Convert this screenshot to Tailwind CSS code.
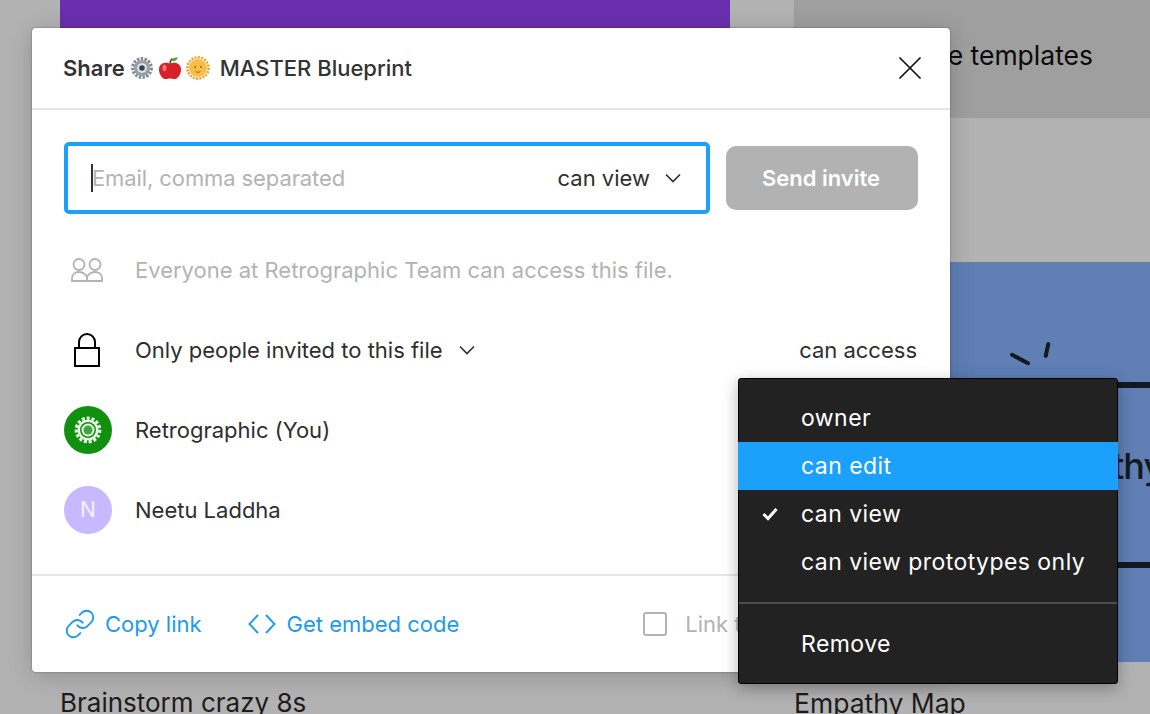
<!DOCTYPE html>
<html lang="en">
<head>
  <meta charset="UTF-8" />
  <title>Share</title>
  <script src="https://cdn.jsdelivr.net/npm/@tailwindcss/browser@4"></script>
</head>
<body class="bg-[#b2b2b2] font-['Inter',sans-serif] text-[#2e2e2e] overflow-hidden">
  <div class="relative w-[1150px] h-[714px] overflow-hidden">

    <!-- page behind the dialog -->
    <div class="grid grid-cols-[670px_356px] gap-x-[64px] pl-[60px] h-[714px] overflow-hidden">
      <div>
        <div class="h-[662px] bg-[#6a2fae]"></div>
        <div class="mt-[24px] text-[26px] leading-[34px] text-[#1c1c1c] whitespace-nowrap">Brainstorm crazy 8s</div>
      </div>
      <div>
        <div class="h-[118px] bg-[#9f9f9f] flex items-start justify-end pr-[57px] pt-[38px] text-[26.5px] leading-[34px] text-[#0a0a0a] whitespace-nowrap">Use case templates</div>
        <div class="h-[144px]"></div>
        <div class="relative h-[400px] bg-[#5f7fb5] overflow-hidden">
          <div class="absolute left-[215px] top-[95px] w-[22px] h-[4px] rotate-[28deg] rounded-full bg-[#14181f]"></div>
          <div class="absolute left-[251px] top-[80px] w-[4px] h-[16px] rotate-[12deg] rounded-full bg-[#14181f]"></div>
          <div class="absolute left-[0px] top-[120px] w-[356px] h-[6px] bg-[#14181f]"></div>
          <div class="absolute left-[0px] top-[300px] w-[356px] h-[6px] bg-[#14181f]"></div>
          <div class="absolute left-[318px] top-[182px] text-[36px] leading-[44px] tracking-[-1px] font-medium text-[#14181f]">thy</div>
        </div>
        <div class="mt-[24px] text-[26.5px] leading-[34px] text-[#1c1c1c] whitespace-nowrap">Empathy Map</div>
      </div>
    </div>

    <!-- share dialog -->
    <div class="absolute left-[32px] top-[28px] w-[918px] h-[644px] bg-white rounded-[4px] shadow-[0_0_2px_rgba(0,0,0,0.4),0_4px_24px_rgba(0,0,0,0.18)] flex flex-col">
      <div class="h-[82px] border-b-2 border-[#e6e6e6] flex items-center justify-between pl-[31px] pr-[28px]">
        <div class="flex items-center text-[22px] font-semibold text-[#333] whitespace-nowrap">
          <span>Share</span>
          <svg class="ml-[6px]" width="22" height="22" viewBox="0 0 22 22"><circle cx="11" cy="11" r="9.200" fill="none" stroke="#7f8891" stroke-width="3.400" stroke-dasharray="2.400 1.400"/><circle cx="11" cy="11" r="8" fill="#98a1ab"/><circle cx="11" cy="11" r="4.800" fill="#e3e6ea"/><circle cx="11" cy="11" r="2.800" fill="#39424c"/></svg>
          <svg class="ml-[6px]" width="22" height="24" viewBox="0 0 22 24"><path d="M11 8C8 5.800 .5 6.500 0 13c-.3 5 3.500 10 6.500 10 1.500 0 3.300-.6 4.500-.6s3 .6 4.500.6c3 0 6.800-5 6.500-10C21.500 6.500 14 5.800 11 8z" fill="#d8202a"/><path d="M11 8c0-2 .6-4 2-5.500" fill="none" stroke="#5d4021" stroke-width="1.400"/><path d="M12 5c1-3 4-4 7-3.500-.7 2.500-4 4.500-7 3.500z" fill="#5aa032"/><ellipse cx="5.500" cy="12" rx="2" ry="3.200" fill="#f0787c"/></svg>
          <svg class="ml-[5px]" width="24" height="24" viewBox="0 0 24 24"><circle cx="12" cy="12" r="10.600" fill="none" stroke="#f0a02a" stroke-width="2.600" stroke-dasharray="2 1.300"/><circle cx="12" cy="12" r="9" fill="#f8bd45"/><circle cx="9" cy="11" r="1" fill="#a4651a"/><circle cx="15" cy="11" r="1" fill="#a4651a"/><path d="M9.500 15.500c1.500 1 3.500 1 5 0" fill="none" stroke="#a4651a" stroke-width="1"/></svg>
          <span class="ml-[10px] font-medium">MASTER Blueprint</span>
        </div>
        <svg width="24" height="24" viewBox="0 0 24 24" fill="none" stroke="#111" stroke-width="1.700"><path d="M1.500 1.500l21 21M22.500 1.500l-21 21"/></svg>
      </div>

      <div class="flex-1 pl-[32px] pr-[32px] pt-[32px]">
        <div class="flex items-center justify-between">
          <div class="w-[646px] h-[72px] border-[4px] border-[#1ba1fb] rounded-[5px] flex items-center pl-[23px] pr-[25px] text-[22px]">
            <span class="w-[2px] h-[28px] bg-[#333] -mr-[1px]"></span>
            <span class="flex-1 text-[#b3b3b3] tracking-[-0.1px]">Email, comma separated</span>
            <span>can view</span>
            <svg class="ml-[15px]" width="16" height="10" viewBox="0 0 16 10" fill="none" stroke="#333" stroke-width="1.700"><path d="M1 1.500l7 7 7-7"/></svg>
          </div>
          <div class="w-[192px] h-[64px] pr-[2px] rounded-[10px] bg-[#b2b2b2] text-white text-[22px] font-semibold flex items-center justify-center">Send invite</div>
        </div>

        <div class="mt-[16px] h-[80px] flex items-center text-[22px] text-[#b3b3b3]">
          <svg class="ml-[7px] mr-[32px]" width="32" height="24" viewBox="0 0 32 24" fill="none" stroke="#b3b3b3" stroke-width="1.800"><circle cx="8" cy="6.500" r="5.500"/><circle cx="24" cy="6.500" r="5.500"/><path d="M1 23v-3c0-3.500 3-6 7-6s8 2.500 8 6c0-3.500 4-6 8-6s7 2.500 7 6v3zM16 20v3"/></svg>
          <span>Everyone at Retrographic Team can access this file.</span>
        </div>

        <div class="h-[80px] flex items-center text-[22px]">
          <svg class="ml-[10px] mr-[35px]" width="26" height="34" viewBox="0 0 26 34" fill="none" stroke="#000" stroke-width="2"><rect x="1" y="15" width="24" height="18"/><path d="M5 15V9a8 8 0 0 1 16 0v6"/></svg>
          <span>Only people invited to this file</span>
          <svg class="ml-[16px]" width="16" height="10" viewBox="0 0 16 10" fill="none" stroke="#333" stroke-width="1.700"><path d="M1 1.500l7 7 7-7"/></svg>
          <span class="ml-auto pr-[1px]">can access</span>
        </div>

        <div class="h-[80px] flex items-center text-[22px]">
          <div class="w-[48px] h-[48px] mr-[23px] rounded-full bg-[#11900f] flex items-center justify-center">
            <svg width="28" height="28" viewBox="0 0 28 28"><circle cx="14" cy="14" r="11.800" fill="none" stroke="#e8f5e8" stroke-width="3.200" stroke-dasharray="3 1.900"/><circle cx="14" cy="14" r="10.500" fill="#e8f5e8"/><circle cx="14" cy="14" r="8" fill="#11900f"/><circle cx="14" cy="14" r="6.500" fill="#e8f5e8"/><circle cx="14" cy="14" r="4.500" fill="#3fa63d"/></svg>
          </div>
          <span>Retrographic (You)</span>
        </div>

        <div class="h-[80px] flex items-center text-[22px]">
          <div class="w-[48px] h-[48px] mr-[23px] rounded-full bg-[#c7b9ff] flex items-center justify-center text-white/80 text-[21px]">N</div>
          <span>Neetu Laddha</span>
        </div>
      </div>

      <div class="h-[98px] border-t-2 border-[#e6e6e6] flex items-center pl-[32px] text-[22px] text-[#1c9bee]">
        <svg width="32" height="32" viewBox="0 0 24 24" fill="none" stroke="#1c9bee" stroke-width="1.400" stroke-linecap="round"><path d="M10 13a5 5 0 0 0 7.540.54l3-3a5 5 0 0 0-7.070-7.070l-1.720 1.710"/><path d="M14 11a5 5 0 0 0-7.540-.54l-3 3a5 5 0 0 0 7.070 7.070l1.710-1.710"/></svg>
        <span class="ml-[9px]">Copy link</span>
        <svg class="ml-[46px]" width="28" height="22" viewBox="0 0 28 22" fill="none" stroke="#1c9bee" stroke-width="1.900"><path d="M10 2l-8.500 9 8.500 9M18 2l8.500 9-8.500 9"/></svg>
        <span class="ml-[11px]">Get embed code</span>
        <span class="ml-[184px] w-[24px] h-[24px] rounded-[3px] border-2 border-[#b3b3b3]"></span>
        <span class="ml-[18px] text-[#b3b3b3] whitespace-nowrap">Link to</span>
      </div>
    </div>

    <!-- role menu -->
    <div class="absolute left-[738px] top-[378px] w-[380px] h-[306px] bg-[#222222] rounded-[3px] border border-black shadow-[0_4px_16px_rgba(0,0,0,0.3)] py-[15px] text-white text-[23px] tracking-[0.45px]">
      <div class="h-[48px] flex items-center pl-[62px]">owner</div>
      <div class="h-[48px] flex items-center pl-[63px] -mx-[1px] bg-[#1ba1fb]">can edit</div>
      <div class="h-[48px] flex items-center relative pl-[62px]">
        <svg class="absolute left-[23px] top-[17px]" width="16" height="14" viewBox="0 0 16 14" fill="none" stroke="#fff" stroke-width="3"><path d="M1.500 7l4.500 4.500L14.500 2"/></svg>
        can view
      </div>
      <div class="h-[48px] flex items-center pl-[62px] whitespace-nowrap">can view prototypes only</div>
      <div class="mt-[16px] border-t-2 border-[#4d4d4d]"></div>
      <div class="mt-[16px] h-[48px] flex items-center pl-[62px]">Remove</div>
    </div>
  </div>
</body>
</html>
